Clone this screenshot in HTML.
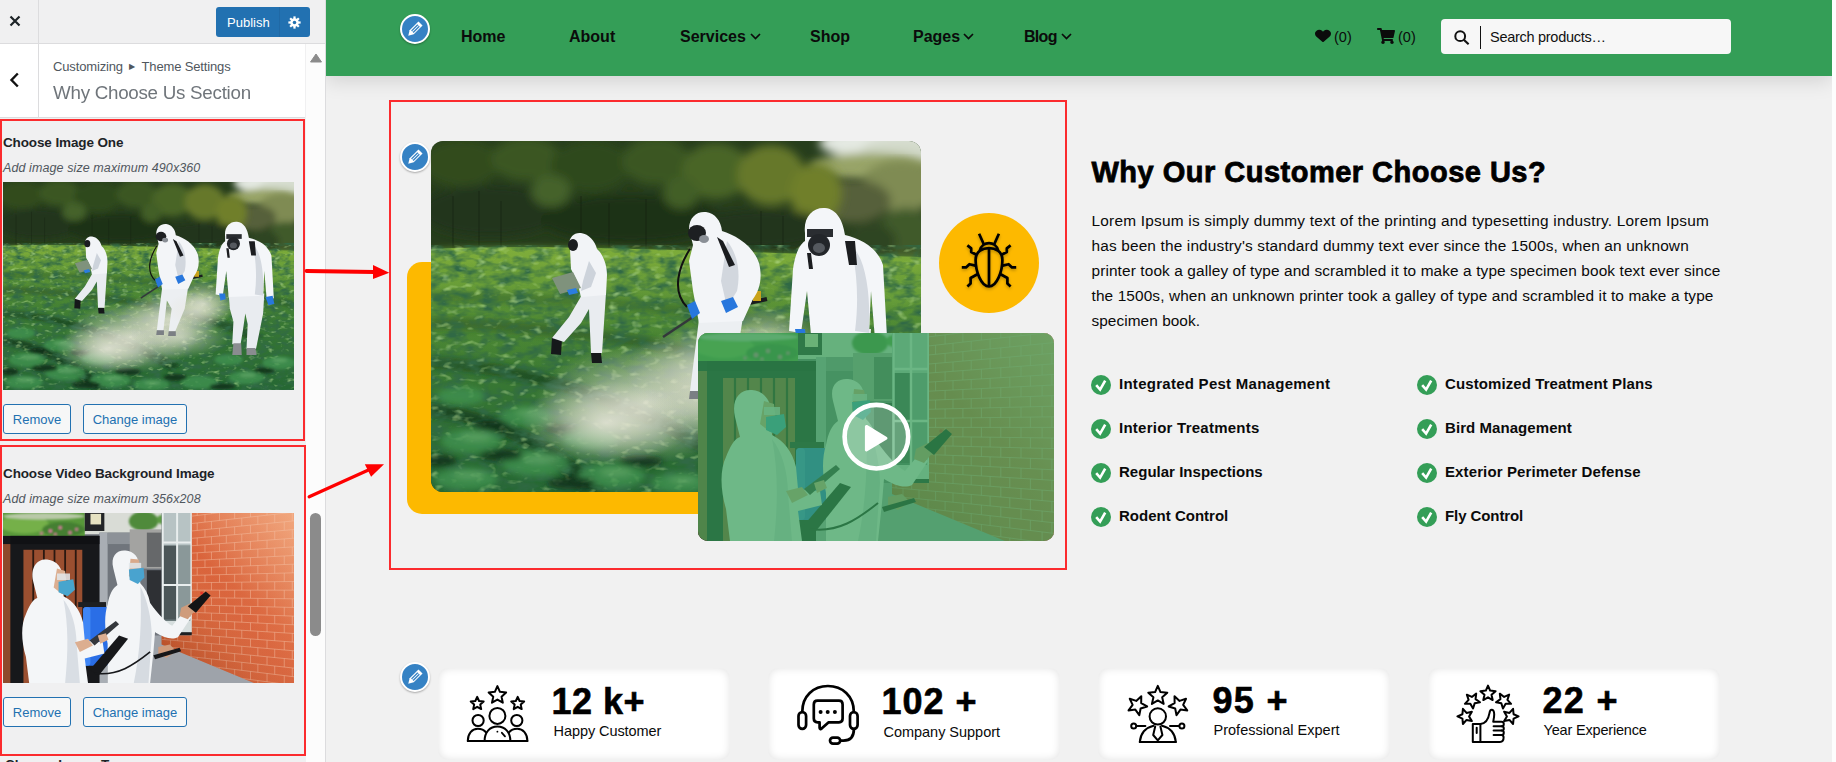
<!DOCTYPE html>
<html lang="en">
<head>
<meta charset="utf-8">
<title>Customize: Why Choose Us Section</title>
<style>
*{box-sizing:border-box;margin:0;padding:0}
html,body{width:1836px;height:762px;overflow:hidden;background:#f0f0f1;font-family:"Liberation Sans",sans-serif;color:#000}
.abs{position:absolute}
#side{position:absolute;left:0;top:0;width:326px;height:762px;background:#f0f0f1;overflow:hidden;border-right:1px solid #dcdcde}
#side .top{position:absolute;left:0;top:0;width:325px;height:44px;border-bottom:1px solid #dcdcde;background:#f0f0f1}
#side .close{position:absolute;left:0;top:0;width:39px;height:43px;border-right:1px solid #dcdcde}
#side .hdr{position:absolute;left:0;top:44px;width:305px;height:74px;background:#fff;border-bottom:1px solid #dcdcde}
#side .back{position:absolute;left:0;top:0;width:39px;height:73px;border-right:1px solid #dcdcde}
#side .track{position:absolute;left:306px;top:44px;width:19px;height:718px;background:#fcfcfc}
#side .thumb{position:absolute;left:310px;top:513px;width:11px;height:123px;border-radius:6px;background:#8b8b8b}
.pub{position:absolute;left:216px;top:7px;width:94px;height:30px;background:#2271b1;border-radius:3px;color:#fff;font-size:13px;line-height:30px}
.pub span{position:absolute;left:11px;top:1px}
.crumb{position:absolute;left:53px;top:15px;font-size:13px;color:#50575e;white-space:nowrap;line-height:16px}
.ttl{position:absolute;left:53px;top:35px;font-size:18.8px;color:#50575e;white-space:nowrap;line-height:28px;font-weight:400;letter-spacing:-0.2px;opacity:.82}
.rbox{position:absolute;border:2px solid #fb2b2e}
.lab{position:absolute;left:3px;font-size:13.5px;font-weight:700;color:#1d2327;white-space:nowrap;line-height:16px}
.desc{position:absolute;left:3px;font-size:12.5px;font-style:italic;color:#50575e;white-space:nowrap;line-height:16px}
.btn{position:absolute;height:30px;border:1px solid #2271b1;border-radius:3px;background:#f6f7f7;color:#2271b1;font-size:13px;line-height:29px;text-align:center}
#main{position:absolute;left:326px;top:0;width:1506px;height:762px;background:#f1f1f1;overflow:hidden}
#rstrip{position:absolute;left:1832px;top:0;width:4px;height:762px;background:#fdfdfd}
#nav{position:absolute;left:0;top:0;width:1506px;height:76px;background:#349e57;box-shadow:0 4px 20px rgba(0,0,0,.14)}
.ni{position:absolute;top:27px;font-size:16px;font-weight:700;color:#0b0b0b;line-height:20px;white-space:nowrap}
.cnt{position:absolute;top:28px;font-size:14.5px;color:#0b0b0b;line-height:18px;white-space:nowrap}
.search{position:absolute;left:1115px;top:19px;width:290px;height:35px;background:#f7f7f7;border-radius:4px}
.search .bar{position:absolute;left:38.5px;top:7px;width:1.6px;height:23px;background:#111}
.search .ph{position:absolute;left:49px;top:8px;font-size:14.5px;color:#111;line-height:20px;white-space:nowrap}
.edit{position:absolute;border-radius:50%;background:#3582c4;border:2px solid #fff;box-shadow:0 1px 2px rgba(0,0,0,.3)}
h1.why{-webkit-text-stroke:.8px #000;position:absolute;left:765.5px;top:154px;font-size:29px;font-weight:700;line-height:36px;white-space:nowrap;color:#000;letter-spacing:.1px}
.para{position:absolute;left:765.5px;font-size:15.4px;line-height:25px;white-space:nowrap;color:#0a0a0a}
.li{position:absolute;font-size:15px;font-weight:700;line-height:20px;white-space:nowrap;color:#0a0a0a}
.chk{position:absolute;width:20px;height:20px;border-radius:50%;background:#349e57}
.card{position:absolute;top:668px;width:292px;height:92px;background:#fff;border-radius:10px;box-shadow:inset 0 0 9px rgba(0,0,0,.12)}
.card .num{position:absolute;left:115.5px;top:13.5px;font-size:36px;-webkit-text-stroke:.6px #000;font-weight:700;line-height:40px;white-space:nowrap;color:#000}
.card .lb{position:absolute;left:115.5px;top:54px;font-size:14.5px;line-height:18px;white-space:nowrap;color:#0a0a0a}
</style>
</head>
<body>
<!-- ============ SIDEBAR ============ -->
<div id="side">
  <div class="top">
    <div class="close">
      <svg class="abs" style="left:9px;top:15px" width="12" height="12" viewBox="0 0 12 12"><path d="M1.5 1.5 L10.5 10.5 M10.5 1.5 L1.5 10.5" stroke="#1d2327" stroke-width="2.2" fill="none"/></svg>
    </div>
    <div class="pub"><span>Publish</span>
      <div class="abs" style="left:63px;top:0;width:1px;height:30px;background:#2069a6"></div>
      <svg class="abs" style="left:72px;top:9px" width="13" height="13" viewBox="0 0 14 14"><g fill="#fff"><circle cx="7" cy="7" r="4.6"/><g id="teeth"><rect x="5.8" y="0.4" width="2.4" height="13.2"/><rect x="5.8" y="0.4" width="2.4" height="13.2" transform="rotate(45 7 7)"/><rect x="5.8" y="0.4" width="2.4" height="13.2" transform="rotate(90 7 7)"/><rect x="5.8" y="0.4" width="2.4" height="13.2" transform="rotate(135 7 7)"/></g></g><circle cx="7" cy="7" r="1.9" fill="#2271b1"/></svg>
    </div>
  </div>
  <div class="hdr">
    <div class="back">
      <svg class="abs" style="left:9px;top:28px" width="11" height="16" viewBox="0 0 11 16"><path d="M8.8 1.5 L2.5 8 L8.8 14.5" stroke="#111" stroke-width="2.4" fill="none"/></svg>
    </div>
    <div class="crumb" style="letter-spacing:-0.143px">Customizing <span style="font-size:8px;position:relative;top:-2px;margin:0 3px">&#9654;</span> Theme Settings</div>
    <div class="ttl" style="letter-spacing:-0.273px">Why Choose Us Section</div>
  </div>
  <div class="track">
    <svg class="abs" style="left:3.5px;top:8.8px" width="12" height="10" viewBox="0 0 12 10"><path d="M6 1 L11.5 9 L0.5 9 Z" fill="#8b8b8b" stroke="#8b8b8b" stroke-linejoin="round" stroke-width="1"/></svg>
  </div>
  <div class="thumb"></div>

  <div class="rbox" style="left:0;top:119px;width:305px;height:322px"></div>
  <div class="lab" style="top:135px;letter-spacing:-0.125px">Choose Image One</div>
  <div class="desc" style="top:160px;letter-spacing:0.095px">Add image size maximum 490x360</div>
  <svg class="abs" style="left:3px;top:182px" width="291" height="208" viewBox="0 0 490 351" preserveAspectRatio="none"><use href="#photo1"/></svg>
  <div class="btn" style="left:3px;top:404px;width:68px">Remove</div>
  <div class="btn" style="left:83px;top:404px;width:104px">Change image</div>

  <div class="rbox" style="left:0;top:445px;width:306px;height:310.5px"></div>
  <div class="lab" style="top:466px;letter-spacing:-0.123px">Choose Video Background Image</div>
  <div class="desc" style="top:491px;letter-spacing:0.105px">Add image size maximum 356x208</div>
  <svg class="abs" style="left:3px;top:513px" width="291" height="170" viewBox="0 0 356 208" preserveAspectRatio="none"><use href="#photo2"/></svg>
  <div class="btn" style="left:3px;top:697px;width:68px">Remove</div>
  <div class="btn" style="left:83px;top:697px;width:104px">Change image</div>
  <div class="lab" style="top:757.3px;left:5px">Choose Image Two</div>
</div>

<!-- ============ PREVIEW ============ -->
<div id="main">
  <div id="nav">
    <div class="edit" style="left:74px;top:14px;width:30px;height:30px"><svg class="abs" style="left:0;top:0;width:100%;height:100%" viewBox="-15 -15 30 30"><g transform="rotate(-45) scale(1.08)" fill="#fff"><path d="M-10.2 0 L-5 -3.1 H8.3 V3.1 H-5 Z"/><rect x="-4" y="-1.9" width="9.4" height="3.8" fill="#3582c4"/><rect x="-4" y="-.45" width="9.4" height=".9"/></g></svg></div>
    <div class="ni" style="left:135px">Home</div>
    <div class="ni" style="left:243px">About</div>
    <div class="ni" style="left:354px">Services</div>
    <div class="ni" style="left:484px">Shop</div>
    <div class="ni" style="left:587px">Pages</div>
    <div class="ni" style="left:698px;letter-spacing:-.7px">Blog</div>
    <svg class="abs" style="left:424px;top:33px" width="11" height="7" viewBox="0 0 11 7"><path d="M1 1 L5.5 5.5 L10 1" fill="none" stroke="#0b0b0b" stroke-width="1.7"/></svg><svg class="abs" style="left:637px;top:33px" width="11" height="7" viewBox="0 0 11 7"><path d="M1 1 L5.5 5.5 L10 1" fill="none" stroke="#0b0b0b" stroke-width="1.7"/></svg><svg class="abs" style="left:735px;top:33px" width="11" height="7" viewBox="0 0 11 7"><path d="M1 1 L5.5 5.5 L10 1" fill="none" stroke="#0b0b0b" stroke-width="1.7"/></svg>
    <svg class="abs" style="left:989px;top:29px" width="16" height="14" viewBox="0 0 512 512" preserveAspectRatio="none"><path fill="#0b0b0b" d="M462.3 62.6C407.5 15.9 326 24.3 275.7 76.2L256 96.5l-19.7-20.3C186.1 24.3 104.5 15.9 49.7 62.6c-62.8 53.6-66.1 149.8-9.9 207.9l193.5 199.8c12.5 12.9 32.8 12.9 45.3 0l193.5-199.8c56.3-58.1 53-154.3-9.8-207.9z"/></svg>
    <svg class="abs" style="left:1051px;top:28px" width="18" height="16" viewBox="0 0 576 512" preserveAspectRatio="none"><path fill="#0b0b0b" d="M528.12 301.319l47.273-208C578.806 78.301 567.391 64 551.99 64H159.208l-9.166-44.81C147.758 8.021 137.93 0 126.529 0H24C10.745 0 0 10.745 0 24v16c0 13.255 10.745 24 24 24h69.883l70.248 343.435C147.325 417.1 136 435.222 136 456c0 30.928 25.072 56 56 56s56-25.072 56-56c0-15.674-6.447-29.835-16.824-40h209.647C430.447 426.165 424 440.326 424 456c0 30.928 25.072 56 56 56s56-25.072 56-56c0-22.172-12.888-41.332-31.579-50.405l5.517-24.276c3.413-15.018-8.002-29.319-23.403-29.319H218.117l-6.545-32h293.145c11.206 0 20.92-7.754 23.403-18.681z"/></svg>
    <div class="cnt" style="left:1008px">(0)</div>
    <div class="cnt" style="left:1072px">(0)</div>
    <div class="search"><svg class="abs" style="left:12px;top:10px" width="17" height="17" viewBox="0 0 17 17"><circle cx="7.2" cy="7.2" r="4.9" fill="none" stroke="#111" stroke-width="2"/><path d="M10.8 10.8 L15.6 15.2" stroke="#111" stroke-width="2.2"/></svg><div class="bar"></div><div class="ph" style="letter-spacing:-0.28px">Search products&hellip;</div></div>
  </div>

  <div class="rbox" style="left:63px;top:100px;width:678px;height:470px"></div>


  <!-- image composition -->
  <div class="abs" style="left:81px;top:262px;width:490px;height:252px;background:#fdb900;border-radius:15px"></div>
  <svg class="abs" style="left:105px;top:141px;border-radius:12px" width="490" height="351" viewBox="0 0 490 351"><use href="#photo1"/></svg>
  <div class="abs" style="left:613px;top:213px;width:100px;height:100px;border-radius:50%;background:#fdb900"></div>
  <svg class="abs" style="left:623px;top:223px;overflow:visible" width="80" height="80" viewBox="-40 -40 80 80">
    <defs><filter id="bsh" x="-30%" y="-30%" width="160%" height="160%"><feDropShadow dx="0" dy="1.5" stdDeviation="1.6" flood-color="#000" flood-opacity=".28"/></filter></defs>
    <g fill="none" stroke="#000" stroke-width="2.7" stroke-linecap="butt" stroke-linejoin="round" filter="url(#bsh)">
      <path d="M0 -14.9 C-6 -14.9 -13.4 -12 -13.4 -3 C-13.4 8 -8 23.5 0 23.5 C8 23.5 13.4 8 13.4 -3 C13.4 -12 6 -14.9 0 -14.9 Z"/>
      <path d="M-9.2 -12.4 C-8 -17 -4 -19.8 0 -19.8 C4 -19.8 8 -17 9.2 -12.4"/>
      <path d="M0 -14.9 V23.5"/>
      <path d="M-5.2 -18.8 L-9.9 -29.2 M5.2 -18.8 L9.9 -29.2"/>
      <path d="M-12.6 -8.2 L-17.8 -11 V-14.6 L-21.6 -17.6 M12.6 -8.2 L17.8 -11 V-14.6 L21.6 -17.6"/>
      <path d="M-13.6 2.6 L-19.6 1.2 L-23 4.4 H-27.2 M13.6 2.6 L19.6 1.2 L23 4.4 H27.2"/>
      <path d="M-11.6 11.2 L-18.4 15 V20.4 L-21.6 23.4 M11.6 11.2 L18.4 15 V20.4 L21.6 23.4"/>
    </g>
  </svg>
  <div class="abs" style="left:372px;top:333px;width:356px;height:208px;border-radius:10px;overflow:hidden;background:#349e57">
    <svg class="abs" style="left:0;top:0" width="356" height="208" viewBox="0 0 356 208"><use href="#photo2"/></svg>
    <div class="abs" style="left:0;top:0;width:356px;height:208px;background:rgba(52,158,87,.7)"></div>
    <svg class="abs" style="left:142px;top:68px" width="72" height="72" viewBox="-36 -36 72 72">
      <circle cx=".4" cy="-.3" r="31.8" fill="rgba(255,255,255,.22)" stroke="#fff" stroke-width="4.6"/>
      <path d="M-9.6 -10.6 L10 1.2 L-9.6 13 Z" fill="#fff" stroke="#fff" stroke-width="3" stroke-linejoin="round"/>
    </svg>
  </div>
  <div class="edit" style="left:74px;top:142px;width:30px;height:30px"><svg class="abs" style="left:0;top:0;width:100%;height:100%" viewBox="-15 -15 30 30"><g transform="rotate(-45) scale(1.08)" fill="#fff"><path d="M-10.2 0 L-5 -3.1 H8.3 V3.1 H-5 Z"/><rect x="-4" y="-1.9" width="9.4" height="3.8" fill="#3582c4"/><rect x="-4" y="-.45" width="9.4" height=".9"/></g></svg></div>
  <div class="edit" style="left:74px;top:662px;width:30px;height:30px"><svg class="abs" style="left:0;top:0;width:100%;height:100%" viewBox="-15 -15 30 30"><g transform="rotate(-45) scale(1.08)" fill="#fff"><path d="M-10.2 0 L-5 -3.1 H8.3 V3.1 H-5 Z"/><rect x="-4" y="-1.9" width="9.4" height="3.8" fill="#3582c4"/><rect x="-4" y="-.45" width="9.4" height=".9"/></g></svg></div>

  <h1 class="why" style="letter-spacing:0.488px">Why Our Customer Choose Us?</h1>
  <div class="para" style="top:208px;letter-spacing:0.221px">Lorem Ipsum is simply dummy text of the printing and typesetting industry. Lorem Ipsum</div>
  <div class="para" style="top:233px;letter-spacing:0.156px">has been the industry's standard dummy text ever since the 1500s, when an unknown</div>
  <div class="para" style="top:258px;letter-spacing:0.115px">printer took a galley of type and scrambled it to make a type specimen book text ever since</div>
  <div class="para" style="top:283px;letter-spacing:0.117px">the 1500s, when an unknown printer took a galley of type and scrambled it to make a type</div>
  <div class="para" style="top:308px;letter-spacing:0.054px">specimen book.</div>

  <div class="chk" style="left:765px;top:375px"><svg width="20" height="20" viewBox="-10 -10 20 20" style="position:absolute;left:0;top:0"><path d="M-4.8 0.2 L-0.9 4.6 L4.2 -4.4" fill="none" stroke="#fff" stroke-width="2.6" stroke-linejoin="miter"/></svg></div><div class="li" style="left:793px;top:374px;letter-spacing:0.267px">Integrated Pest Management</div>
  <div class="chk" style="left:1091px;top:375px"><svg width="20" height="20" viewBox="-10 -10 20 20" style="position:absolute;left:0;top:0"><path d="M-4.8 0.2 L-0.9 4.6 L4.2 -4.4" fill="none" stroke="#fff" stroke-width="2.6" stroke-linejoin="miter"/></svg></div><div class="li" style="left:1119px;top:374px;letter-spacing:0.098px">Customized Treatment Plans</div>
  <div class="chk" style="left:765px;top:419px"><svg width="20" height="20" viewBox="-10 -10 20 20" style="position:absolute;left:0;top:0"><path d="M-4.8 0.2 L-0.9 4.6 L4.2 -4.4" fill="none" stroke="#fff" stroke-width="2.6" stroke-linejoin="miter"/></svg></div><div class="li" style="left:793px;top:418px;letter-spacing:0.246px">Interior Treatments</div>
  <div class="chk" style="left:1091px;top:419px"><svg width="20" height="20" viewBox="-10 -10 20 20" style="position:absolute;left:0;top:0"><path d="M-4.8 0.2 L-0.9 4.6 L4.2 -4.4" fill="none" stroke="#fff" stroke-width="2.6" stroke-linejoin="miter"/></svg></div><div class="li" style="left:1119px;top:418px;letter-spacing:0.067px">Bird Management</div>
  <div class="chk" style="left:765px;top:463px"><svg width="20" height="20" viewBox="-10 -10 20 20" style="position:absolute;left:0;top:0"><path d="M-4.8 0.2 L-0.9 4.6 L4.2 -4.4" fill="none" stroke="#fff" stroke-width="2.6" stroke-linejoin="miter"/></svg></div><div class="li" style="left:793px;top:462px;letter-spacing:0.018px">Regular Inspections</div>
  <div class="chk" style="left:1091px;top:463px"><svg width="20" height="20" viewBox="-10 -10 20 20" style="position:absolute;left:0;top:0"><path d="M-4.8 0.2 L-0.9 4.6 L4.2 -4.4" fill="none" stroke="#fff" stroke-width="2.6" stroke-linejoin="miter"/></svg></div><div class="li" style="left:1119px;top:462px;letter-spacing:0.12px">Exterior Perimeter Defense</div>
  <div class="chk" style="left:765px;top:507px"><svg width="20" height="20" viewBox="-10 -10 20 20" style="position:absolute;left:0;top:0"><path d="M-4.8 0.2 L-0.9 4.6 L4.2 -4.4" fill="none" stroke="#fff" stroke-width="2.6" stroke-linejoin="miter"/></svg></div><div class="li" style="left:793px;top:506px;letter-spacing:0.011px">Rodent Control</div>
  <div class="chk" style="left:1091px;top:507px"><svg width="20" height="20" viewBox="-10 -10 20 20" style="position:absolute;left:0;top:0"><path d="M-4.8 0.2 L-0.9 4.6 L4.2 -4.4" fill="none" stroke="#fff" stroke-width="2.6" stroke-linejoin="miter"/></svg></div><div class="li" style="left:1119px;top:506px;letter-spacing:-0.087px">Fly Control</div>
  <div class="card" style="left:112px"><svg class="abs" style="left:17px;top:7px" width="90" height="75" viewBox="0 0 90 75" fill="none" stroke="#000" stroke-width="2" stroke-linejoin="round" stroke-linecap="round">
      <path d="M42.40 11.10 L44.94 16.80 L51.15 17.46 L46.51 21.64 L47.81 27.74 L42.40 24.62 L36.99 27.74 L38.29 21.64 L33.65 17.46 L39.86 16.80 Z"/><path d="M22.20 21.80 L24.08 26.01 L28.67 26.50 L25.24 29.59 L26.20 34.10 L22.20 31.80 L18.20 34.10 L19.16 29.59 L15.73 26.50 L20.32 26.01 Z"/><path d="M62.70 21.80 L64.58 26.01 L69.17 26.50 L65.74 29.59 L66.70 34.10 L62.70 31.80 L58.70 34.10 L59.66 29.59 L56.23 26.50 L60.82 26.01 Z"/>
      <circle cx="42.4" cy="40.9" r="8"/><circle cx="23.1" cy="45.5" r="5.6"/><circle cx="61.8" cy="45.5" r="5.6"/>
      <path d="M12.8 66 H72.4"/>
      <path d="M29.6 66 C29.6 57 35 51.6 42.4 51.6 C49.8 51.6 55.4 57 55.4 66"/>
      <path d="M12.8 66 C12.8 58.5 17 53.8 22.8 53.8 C26.6 53.8 29.4 55.4 31.2 57.6"/>
      <path d="M72.4 66 C72.4 58.5 68 53.8 62.2 53.8 C58.4 53.8 55.6 55.4 53.8 57.6"/>
      <path d="M42.4 56.6 v.1 M46.9 57.8 L50 61.4" stroke-width="1.8"/>
    </svg><div class="num" style="left:113.5px;letter-spacing:0.5px">12 k+</div><div class="lb" style="letter-spacing:-0.069px">Happy Customer</div></div>
  <div class="card" style="left:442px"><svg class="abs" style="left:17px;top:7px" width="90" height="75" viewBox="0 0 90 75" fill="none" stroke="#000" stroke-width="2.7" stroke-linejoin="round" stroke-linecap="round">
      <path d="M17.3 36.6 C17.3 21 28.5 11 42.9 11 C57.3 11 68.8 21 68.8 36.6"/>
      <rect x="13.5" y="37.2" width="7.6" height="16.6" rx="3.8"/>
      <rect x="65" y="37.2" width="7.6" height="16.6" rx="3.8"/>
      <path d="M68.9 54 C68.9 62 65 65.6 58.5 65.6 H56"/>
      <rect x="45" y="62.6" width="10.2" height="6" rx="3"/>
      <path d="M32.5 25.6 H54 C56.4 25.6 57.6 27 57.6 29.4 V43.6 C57.6 46 56.4 47.4 54 47.4 H43.4 L36.6 53.6 C35.6 54.4 34.6 54 34.6 52.8 V47.4 H32.5 C30 47.4 28.8 46 28.8 43.6 V29.4 C28.8 27 30 25.6 32.5 25.6 Z"/>
      <g fill="#000" stroke="none"><circle cx="35.6" cy="37.1" r="2"/><circle cx="42.7" cy="37.1" r="2"/><circle cx="49.9" cy="37.1" r="2"/></g>
    </svg><div class="num" style="left:113.5px;letter-spacing:1.0px">102 +</div><div class="lb" style="top:55px;letter-spacing:-0.027px">Company Support</div></div>
  <div class="card" style="left:772px"><svg class="abs" style="left:17px;top:7px" width="90" height="75" viewBox="0 0 90 75" fill="none" stroke="#000" stroke-width="2" stroke-linejoin="round" stroke-linecap="round">
      <path d="M42.80 10.80 L45.50 17.08 L52.31 17.71 L47.17 22.22 L48.68 28.89 L42.80 25.40 L36.92 28.89 L38.43 22.22 L33.29 17.71 L40.10 17.08 Z"/><path d="M26.27 21.26 L26.18 28.10 L32.15 31.45 L25.62 33.48 L24.28 40.18 L20.33 34.60 L13.54 35.40 L17.63 29.92 L14.77 23.71 L21.24 25.90 Z"/><path d="M59.53 21.26 L64.56 25.90 L71.03 23.71 L68.17 29.92 L72.26 35.40 L65.47 34.60 L61.52 40.18 L60.18 33.48 L53.65 31.45 L59.62 28.10 Z"/>
      <circle cx="42.8" cy="41.4" r="8.2"/>
      <path d="M24.8 67 H60.8"/>
      <path d="M24.8 67 C25.6 58.4 31 52.6 38.6 50.8 M60.8 67 C60 58.4 54.6 52.6 47 50.8"/>
      <path d="M40.2 51.4 L38.2 60 L42.8 65.4 L47.4 60 L45.4 51.4"/>
      <circle cx="18.7" cy="50.9" r="2.5"/><path d="M22 50.9 H30.4"/>
      <circle cx="66.9" cy="50.9" r="2.5"/><path d="M55 50.9 H63.6"/>
    </svg><div class="num" style="top:13px;left:114.5px;letter-spacing:1.3px">95 +</div><div class="lb" style="top:53px;letter-spacing:0.015px">Professional Expert</div></div>
  <div class="card" style="left:1102px"><svg class="abs" style="left:17px;top:7px" width="90" height="75" viewBox="0 0 90 75" fill="none" stroke="#000" stroke-width="2" stroke-linejoin="round" stroke-linecap="round">
      <path d="M43.00 10.60 L45.16 15.62 L50.61 16.13 L46.50 19.74 L47.70 25.07 L43.00 22.28 L38.30 25.07 L39.50 19.74 L35.39 16.13 L40.84 15.62 Z"/><path d="M31.20 18.67 L30.56 24.10 L35.03 27.26 L29.66 28.33 L28.04 33.56 L25.36 28.79 L19.89 28.85 L23.60 24.83 L21.85 19.65 L26.82 21.94 Z"/><path d="M54.80 18.67 L59.18 21.94 L64.15 19.65 L62.40 24.83 L66.11 28.85 L60.64 28.79 L57.96 33.56 L56.34 28.33 L50.97 27.26 L55.44 24.10 Z"/>
      <path d="M17.93 33.79 L21.54 37.90 L26.87 36.70 L24.08 41.40 L26.87 46.10 L21.54 44.90 L17.93 49.01 L17.42 43.56 L12.40 41.40 L17.42 39.24 Z"/><path d="M68.07 33.79 L68.58 39.24 L73.60 41.40 L68.58 43.56 L68.07 49.01 L64.46 44.90 L59.13 46.10 L61.92 41.40 L59.13 36.70 L64.46 37.90 Z"/>
      <rect x="27.8" y="49" width="7.6" height="18"/>
      <path d="M31.7 52.8 V58"/>
      <path d="M35.4 49 C41 48.6 43.6 43 44.4 38.4 C44.8 35.8 45.6 34.8 46.6 34.8 C48.4 34.8 49.2 37 49.2 39.6 C49.2 42.4 48.6 44.8 48.2 46.8 H56.4 C58.2 46.8 58.8 48 58.8 49 C58.8 50.2 58.2 51.2 56.6 51.2 C58.2 51.2 58.8 52.4 58.8 53.4 C58.8 54.6 58.2 55.6 56.6 55.6 C58.2 55.6 58.8 56.8 58.8 57.8 C58.8 59 58.2 60.1 56.6 60.1 C58.2 60.1 58.6 61.4 58.6 62.6 C58.6 65.2 57.6 67 55 67 H35.4"/>
      <path d="M48.6 51.2 H56.6 M48.6 55.6 H56.6 M48.6 60.1 H56.6"/>
    </svg><div class="num" style="top:13px;left:114.5px;letter-spacing:1.3px">22 +</div><div class="lb" style="top:53px;letter-spacing:-0.177px">Year Experience</div></div>
</div>
<div id="rstrip"></div>
<svg class="abs" style="left:0;top:0;pointer-events:none" width="1836" height="762" viewBox="0 0 1836 762">
  <g stroke="#fe0000" fill="#fe0000" stroke-linecap="round">
    <path d="M306.5 270.9 L374 271.9" fill="none" stroke-width="4"/><path d="M373 265 L373 279.1 L389.3 272.7 Z" stroke="none"/>
    <path d="M309.2 496.8 L369 469.8" fill="none" stroke-width="3.3"/><path d="M364.8 464.3 L384 464.3 L371.1 476.8 Z" stroke="none"/>
  </g>
</svg>


<svg width="0" height="0" style="position:absolute">
  <defs>
    <linearGradient id="p1sky" x1="0" y1="0" x2="0" y2="1"><stop offset="0" stop-color="#e3e8e0"/><stop offset=".35" stop-color="#c9d0bd"/><stop offset="1" stop-color="#7f8b52"/></linearGradient>
    <linearGradient id="p1f" x1="0" y1="0" x2="0" y2="1"><stop offset="0" stop-color="#64993a"/><stop offset=".32" stop-color="#417f33"/><stop offset="1" stop-color="#256733"/></linearGradient>
    <linearGradient id="p1y" x1="0" y1="0" x2="0" y2="1"><stop offset="0" stop-color="#8fb83a" stop-opacity=".55"/><stop offset=".6" stop-color="#6fa236" stop-opacity=".28"/><stop offset="1" stop-color="#6fa236" stop-opacity="0"/></linearGradient>
    <radialGradient id="mist"><stop offset="0" stop-color="#efece0" stop-opacity=".8"/><stop offset=".45" stop-color="#e6e3d4" stop-opacity=".5"/><stop offset="1" stop-color="#dedbcc" stop-opacity="0"/></radialGradient>
    <filter id="b1" x="-5%" y="-5%" width="110%" height="110%"><feGaussianBlur stdDeviation="1.2"/></filter>
    <filter id="b2" x="-5%" y="-5%" width="110%" height="110%"><feGaussianBlur stdDeviation="3"/></filter>
    <filter id="b3" x="-5%" y="-5%" width="110%" height="110%"><feGaussianBlur stdDeviation="5"/></filter>
    <filter id="leafD" x="0" y="0" width="100%" height="100%"><feTurbulence type="fractalNoise" baseFrequency=".06 .12" numOctaves="3" seed="4"/><feColorMatrix values="0 0 0 0 0.03  0 0 0 0 0.14  0 0 0 0 0.06  2.4 0 0 0 -0.92"/></filter>
    <filter id="leafL" x="0" y="0" width="100%" height="100%"><feTurbulence type="fractalNoise" baseFrequency=".09 .16" numOctaves="2" seed="11"/><feColorMatrix values="0 0 0 0 0.50  0 0 0 0 0.76  0 0 0 0 0.30  0 2.0 0 0 -1.16"/></filter>
    <symbol id="photo1" viewBox="0 0 490 351">
      <rect width="490" height="351" fill="#263d1c"/>
      <!-- sky + hill top right -->
      <g filter="url(#b3)"><ellipse cx="450" cy="2" rx="62" ry="16" fill="#e4e9e2"/><ellipse cx="470" cy="10" rx="40" ry="14" fill="#d3dacb"/><ellipse cx="440" cy="26" rx="60" ry="14" fill="#98a468"/></g>
      <g filter="url(#b3)">
        <ellipse cx="470" cy="45" rx="40" ry="26" fill="#7f8b52"/>
        <ellipse cx="420" cy="60" rx="40" ry="22" fill="#56603a"/>
        <ellipse cx="475" cy="95" rx="30" ry="28" fill="#3f5a2c"/>
        <ellipse cx="440" cy="100" rx="25" ry="18" fill="#2f4424"/>
      </g>
      <!-- tree crowns -->
      <g filter="url(#b3)">
        <ellipse cx="30" cy="22" rx="40" ry="24" fill="#324c1f"/>
        <ellipse cx="95" cy="18" rx="35" ry="22" fill="#3a5623"/>
        <ellipse cx="160" cy="25" rx="40" ry="26" fill="#2f4a1f"/>
        <ellipse cx="225" cy="20" rx="34" ry="24" fill="#3a5724"/>
        <ellipse cx="285" cy="30" rx="34" ry="28" fill="#4a6526"/>
        <ellipse cx="340" cy="34" rx="34" ry="30" fill="#66782a"/>
        <ellipse cx="385" cy="52" rx="26" ry="30" fill="#6f7f2c"/>
        <ellipse cx="60" cy="70" rx="70" ry="26" fill="#21351a"/>
        <ellipse cx="200" cy="78" rx="90" ry="24" fill="#1d3016"/>
        <ellipse cx="330" cy="88" rx="70" ry="20" fill="#22361a"/>
        <ellipse cx="120" cy="50" rx="20" ry="16" fill="#44622a"/>
        <ellipse cx="250" cy="52" rx="18" ry="16" fill="#425f28"/>
      </g>
      <g stroke="#131f10" stroke-width="1.4" opacity=".4">
        <path d="M22 55V108M48 50V108M70 60V108M150 55V108M178 62V108M215 58V110M330 70V112M352 75V112"/>
      </g>
      <!-- field -->
      <path d="M0 108 C120 102 300 112 490 116 V351 H0 Z" fill="url(#p1f)"/>
      <g filter="url(#b2)">
        <path d="M0 108 C120 102 300 112 490 116 V132 C300 126 120 118 0 124 Z" fill="#6fa23a" opacity=".75"/>
        <path d="M0 150 C150 150 330 165 490 200 V214 C330 178 150 160 0 162 Z" fill="#1d4f26" opacity=".75"/>
        <path d="M0 176 C130 178 300 200 440 260 L420 268 C300 212 130 190 0 188 Z" fill="#174222" opacity=".7"/>
        <path d="M0 215 C90 220 200 250 300 310 L280 318 C190 262 90 232 0 228 Z" fill="#133a1e" opacity=".7"/>
        <path d="M0 262 C60 268 130 300 180 351 H150 C110 310 60 282 0 276 Z" fill="#12351c" opacity=".7"/>
        <ellipse cx="440" cy="150" rx="60" ry="16" fill="#5f9a3a" opacity=".7"/>
        <ellipse cx="60" cy="140" rx="70" ry="10" fill="#5a9436" opacity=".6"/>
      </g>
      <path d="M0 108 C120 102 300 112 490 116 V240 H0 Z" fill="url(#p1y)"/>
      <rect x="0" y="104" width="490" height="247" filter="url(#leafD)"/>
      <rect x="0" y="104" width="490" height="247" filter="url(#leafL)"/>
      <!-- cabbages bottom -->
      <g filter="url(#b2)" opacity=".8">
        <g fill="#3f9250">
          <ellipse cx="40" cy="300" rx="30" ry="12"/><ellipse cx="105" cy="322" rx="34" ry="13"/><ellipse cx="35" cy="338" rx="32" ry="11"/>
          <ellipse cx="180" cy="335" rx="34" ry="12"/><ellipse cx="250" cy="342" rx="30" ry="10"/><ellipse cx="95" cy="275" rx="26" ry="10"/>
          <ellipse cx="160" cy="298" rx="28" ry="10"/><ellipse cx="30" cy="255" rx="24" ry="9"/><ellipse cx="330" cy="338" rx="30" ry="11"/>
          <ellipse cx="410" cy="330" rx="30" ry="11"/><ellipse cx="465" cy="305" rx="28" ry="11"/><ellipse cx="380" cy="300" rx="24" ry="9"/>
        </g>
        <g fill="#0f2c18">
          <ellipse cx="70" cy="314" rx="22" ry="6"/><ellipse cx="140" cy="342" rx="24" ry="6"/><ellipse cx="10" cy="320" rx="16" ry="6"/>
          <ellipse cx="210" cy="320" rx="22" ry="6"/><ellipse cx="60" cy="285" rx="18" ry="5"/><ellipse cx="130" cy="288" rx="16" ry="5"/>
          <ellipse cx="290" cy="330" rx="20" ry="6"/><ellipse cx="370" cy="345" rx="22" ry="5"/><ellipse cx="440" cy="318" rx="18" ry="5"/>
        </g>
        <g fill="#7fc07e" opacity=".55">
          <ellipse cx="45" cy="296" rx="16" ry="4"/><ellipse cx="110" cy="318" rx="18" ry="4"/><ellipse cx="185" cy="331" rx="16" ry="4"/>
          <ellipse cx="38" cy="334" rx="16" ry="3.5"/><ellipse cx="98" cy="272" rx="13" ry="3.5"/><ellipse cx="252" cy="339" rx="14" ry="3"/>
          <ellipse cx="412" cy="326" rx="14" ry="3.5"/><ellipse cx="466" cy="301" rx="13" ry="3.5"/>
        </g>
      </g>
      <!-- mist -->
      <ellipse cx="215" cy="262" rx="112" ry="60" fill="url(#mist)"/>
      <ellipse cx="280" cy="232" rx="85" ry="50" fill="url(#mist)"/>
      <ellipse cx="175" cy="282" rx="85" ry="42" fill="url(#mist)"/>
      <ellipse cx="335" cy="205" rx="60" ry="40" fill="url(#mist)" opacity=".9"/>
      <ellipse cx="300" cy="262" rx="80" ry="36" fill="url(#mist)" opacity=".7"/>
      <!-- figure 1 (left) -->
      <g>
        <path d="M121 196 L131 198 L130 214 L120 213 Z M160 212 L170 212 L171 222 L161 222 Z" fill="#15181a"/>
        <path d="M152 152 L138 176 L121 197 L133 201 L150 182 L158 168 L160 212 L171 212 L175 152 Z" fill="#e9ecf0"/>
        <path d="M139 108 C136 98 142 91 150 92 C158 93 164 100 166 108 C172 113 176 124 176 134 L175 154 L150 156 L146 140 L140 128 Z" fill="#f2f4f7"/>
        <path d="M158 120 L165 132 L160 146 L150 150 L152 140 Z" fill="#cdd3db"/>
        <ellipse cx="142" cy="104" rx="5" ry="6" fill="#1b1d20"/>
        <path d="M121 137 L142 131 L150 147 L129 153 Z" fill="#7f927c"/>
        <path d="M136 149 l9 -2 l2 5 l-9 2z" fill="#2b7de0"/>
      </g>
      <!-- figure 2 (middle) -->
      <g>
        <path d="M259 108 C248 125 240 150 256 166" fill="none" stroke="#111" stroke-width="2"/>
        <path d="M262 176 L232 196" stroke="#33373a" stroke-width="2.5"/>
        <path d="M300 166 L336 158" stroke="#1a1c1e" stroke-width="4"/>
        <path d="M322 150 h8 v10 h-8z" fill="#c9a21a"/>
        <path d="M268 178 L312 176 L306 214 L290 252 L279 252 L284 214 L276 200 L270 252 L259 250 Z" fill="#eceff2"/>
        <path d="M259 250 h12 v8 h-13z M279 252 h12 v8 h-13z" fill="#7b7f84"/>
        <path d="M258 88 C258 76 266 70 275 71 C284 72 290 80 291 90 C304 94 322 104 328 122 C332 138 328 150 322 158 L312 180 L268 182 L262 150 L258 120 L262 104 Z" fill="#f3f5f8"/>
        <path d="M296 100 C306 112 310 130 306 150 L296 166 L290 140 Z" fill="#d2d7de"/>
        <path d="M286 96 L292 100 L304 124 L298 126 Z" fill="#1a1c1f"/>
        <ellipse cx="266" cy="92" rx="9" ry="8" fill="#1d1f22"/>
        <ellipse cx="273" cy="98" rx="5" ry="4" fill="#8a8f96"/>
        <path d="M256 164 l8 -4 l5 12 l-8 6z" fill="#2877dd"/>
        <path d="M290 160 l12 -4 l5 10 l-12 6z" fill="#2877dd"/>
      </g>
      <!-- figure 3 (right) -->
      <g>
        <path d="M380 190 L440 188 L438 222 L430 262 L426 282 L410 282 L412 240 L408 222 L404 250 L400 274 L386 274 L388 236 L382 214 Z" fill="#e9ecf0"/>
        <path d="M388 272 h13 l1 20 h-16z M410 280 h15 l2 12 h-17z" fill="#8a8c90"/>
        <path d="M374 92 C372 76 382 66 394 67 C406 68 412 80 414 94 C430 98 446 106 452 124 L456 196 L444 198 L440 150 L438 192 L380 194 L376 150 L370 192 L358 190 L362 128 C364 114 368 104 374 100 Z" fill="#f4f6f9"/>
        <path d="M420 104 C434 116 440 150 438 192 L424 190 C428 160 426 130 420 104 Z" fill="#d4d9e0"/>
        <path d="M414 100 L424 100 L426 124 L418 124 Z M376 112 l4 0 l2 16 l-4 0z" fill="#1b1d20"/>
        <path d="M376 88 h26 v8 h-26z" fill="#2a2d31"/>
        <ellipse cx="388" cy="104" rx="11" ry="11" fill="#23262a"/>
        <ellipse cx="388" cy="107" rx="6" ry="5" fill="#55595f"/>
        <path d="M364 188 l10 0 l1 10 l-9 2z" fill="#2877dd"/>
        <path d="M442 194 l12 -2 l3 14 l-10 2z" fill="#2877dd"/>
      </g>
      <ellipse cx="330" cy="215" rx="55" ry="30" fill="url(#mist)" opacity=".55"/>
    </symbol>
    <linearGradient id="brk" x1="0" y1="1" x2="1" y2="0"><stop offset="0" stop-color="#d8602f"/><stop offset=".5" stop-color="#d9623a"/><stop offset="1" stop-color="#ec9468"/></linearGradient>
    <linearGradient id="brksh" x1="1" y1="0" x2=".3" y2="1"><stop offset="0" stop-color="#ffd9b8" stop-opacity=".28"/><stop offset=".5" stop-color="#ffd9b8" stop-opacity="0"/><stop offset="1" stop-color="#5a1f0c" stop-opacity=".25"/></linearGradient>
    <clipPath id="brkclip"><path d="M231 0 H356 V208 H307 L194 161 V150 H231 Z"/></clipPath>
    <symbol id="photo2" viewBox="0 0 356 208">
      <rect width="356" height="208" fill="#6d7278"/>
      <!-- background building / plants top -->
      <rect x="98" y="0" width="134" height="26" fill="#d9dcd6"/>
      <g filter="url(#b1)"><ellipse cx="172" cy="10" rx="18" ry="12" fill="#4f8a3a"/><ellipse cx="196" cy="8" rx="8" ry="6" fill="#5c9a42"/></g>
      <!-- foliage top-left -->
      <rect x="0" y="0" width="100" height="30" fill="#58983a"/>
      <g filter="url(#b1)">
        <ellipse cx="26" cy="14" rx="30" ry="11" fill="#74b048"/><ellipse cx="74" cy="20" rx="26" ry="9" fill="#447f30"/><ellipse cx="50" cy="4" rx="50" ry="4" fill="#b9c9a8"/>
        <g fill="#e07aa6"><circle cx="58" cy="22" r="2.2"/><circle cx="70" cy="18" r="2"/><circle cx="82" cy="24" r="2"/><circle cx="47" cy="25" r="1.8"/><circle cx="90" cy="20" r="1.6"/><circle cx="64" cy="26" r="1.6"/></g>
      </g>
      <!-- gray wall middle + AC unit -->
      <rect x="118" y="24" width="78" height="184" fill="#70757c"/>
      <rect x="118" y="24" width="10" height="184" fill="#a9aeb4"/>
      <rect x="128" y="24" width="28" height="14" fill="#8d9298"/>
      <rect x="155" y="20" width="40" height="48" fill="#a3a3a1"/>
      <rect x="176" y="24" width="18" height="42" fill="#66686a"/>
      <rect x="176" y="70" width="18" height="76" fill="#2e3034"/>
      <!-- lamp -->
      <rect x="100" y="0" width="24" height="22" fill="#222427"/><rect x="107" y="1" width="13" height="13" fill="#e6e2c2"/>
      <!-- gate -->
      <rect x="0" y="28" width="118" height="180" fill="#17181b"/>
      <rect x="0" y="38" width="9" height="170" fill="#8e4a2c"/>
      <rect x="25" y="45" width="72" height="163" fill="#9a4f30"/>
      <path d="M37 45V208M50 45V208M63 45V208M76 45V208M89 45V208" stroke="#2a1810" stroke-width="2.2"/>
      <rect x="9" y="28" width="109" height="10" fill="#101114"/>
      <!-- window -->
      <rect x="194" y="0" width="38" height="152" fill="#5f6e70"/>
      <rect x="196" y="0" width="34" height="40" fill="#b7c3c4"/>
      <rect x="197" y="40" width="15" height="90" fill="#4b5658"/>
      <rect x="214" y="40" width="16" height="100" fill="#8a9899"/>
      <path d="M195.5 0V146M213 0V146M230.5 0V146M195 36H231M195 88H231" stroke="#e9eeee" stroke-width="2.4"/>
      <rect x="196" y="132" width="35" height="14" fill="#d6dede"/>
      <rect x="194" y="146" width="38" height="6" fill="#1d1f22"/>
      <!-- ground/ledge (gray) -->
      <path d="M176 150 H232 L356 208 H176 Z" fill="#9ea3aa"/>
      <!-- brick wall -->
      <path d="M231 0 H356 V208 H307 L194 161 V150 H231 Z" fill="url(#brk)"/>
      <path d="M194 -17.4L356 -43.4M205.0 -19.2V-10.4M221.0 -21.7V-12.8M237.6 -24.4V-15.3M255.0 -27.2V-17.8M273.2 -30.1V-20.5M292.1 -33.1V-23.3M311.8 -36.3V-26.3M332.4 -39.6V-29.3M353.9 -43.1V-32.5M194 -8.8L356 -32.8M198.0 -9.4V-0.7M213.7 -11.7V-2.9M230.0 -14.1V-5.1M247.1 -16.7V-7.4M264.9 -19.3V-9.8M283.4 -22.0V-12.3M302.8 -24.9V-15.0M323.0 -27.9V-17.7M344.1 -31.0V-20.6M194 -0.2L356 -22.2M205.0 -1.7V7.0M221.0 -3.9V5.1M237.6 -6.1V3.0M255.0 -8.5V0.9M273.2 -11.0V-1.4M292.1 -13.5V-3.7M311.8 -16.2V-6.1M332.4 -19.0V-8.7M353.9 -21.9V-11.3M194 8.4L356 -11.6M198.0 7.9V16.6M213.7 6.0V14.8M230.0 4.0V13.0M247.1 1.8V11.1M264.9 -0.3V9.1M283.4 -2.6V7.1M302.8 -5.0V4.9M323.0 -7.5V2.7M344.1 -10.1V0.3M194 17.0L356 -1.0M205.0 15.8V24.5M221.0 14.0V22.9M237.6 12.2V21.3M255.0 10.2V19.6M273.2 8.2V17.8M292.1 6.1V15.9M311.8 3.9V14.0M332.4 1.6V11.9M353.9 -0.8V9.8M194 25.6L356 9.6M198.0 25.2V33.9M213.7 23.7V32.5M230.0 22.0V31.1M247.1 20.4V29.6M264.9 18.6V28.1M283.4 16.8V26.5M302.8 14.9V24.8M323.0 12.9V23.1M344.1 10.8V21.2M194 34.2L356 20.2M205.0 33.2V42.0M221.0 31.9V40.8M237.6 30.4V39.6M255.0 28.9V38.3M273.2 27.4V36.9M292.1 25.7V35.5M311.8 24.0V34.1M332.4 22.2V32.5M353.9 20.4V31.0M194 42.8L356 30.8M198.0 42.5V51.2M213.7 41.3V50.2M230.0 40.1V49.2M247.1 38.9V48.1M264.9 37.6V47.0M283.4 36.2V45.9M302.8 34.7V44.7M323.0 33.2V43.4M344.1 31.7V42.1M194 51.4L356 41.4M205.0 50.7V59.5M221.0 49.7V58.7M237.6 48.7V57.8M255.0 47.6V57.0M273.2 46.5V56.1M292.1 45.3V55.2M311.8 44.1V54.2M332.4 42.9V53.2M353.9 41.5V52.1M194 60.0L356 52.0M198.0 59.8V68.5M213.7 59.0V67.9M230.0 58.2V67.3M247.1 57.4V66.6M264.9 56.5V66.0M283.4 55.6V65.3M302.8 54.6V64.6M323.0 53.6V63.8M344.1 52.6V63.0M194 68.6L356 62.6M205.0 68.2V76.9M221.0 67.6V76.5M237.6 67.0V76.1M255.0 66.3V75.7M273.2 65.7V75.2M292.1 65.0V74.8M311.8 64.2V74.3M332.4 63.5V73.8M353.9 62.7V73.3M194 77.2L356 73.2M198.0 77.1V85.8M213.7 76.7V85.6M230.0 76.3V85.4M247.1 75.9V85.1M264.9 75.5V84.9M283.4 75.0V84.7M302.8 74.5V84.5M323.0 74.0V84.2M344.1 73.5V83.9M194 85.8L356 83.8M205.0 85.7V94.4M221.0 85.5V94.4M237.6 85.3V94.4M255.0 85.0V94.4M273.2 84.8V94.4M292.1 84.6V94.4M311.8 84.3V94.4M332.4 84.1V94.4M353.9 83.8V94.4M194 94.4L356 94.4M198.0 94.4V103.0M213.7 94.4V103.2M230.0 94.4V103.4M247.1 94.4V103.7M264.9 94.4V103.9M283.4 94.4V104.1M302.8 94.4V104.3M323.0 94.4V104.6M344.1 94.4V104.9M194 103.0L356 105.0M205.0 103.1V111.9M221.0 103.3V112.3M237.6 103.5V112.7M255.0 103.8V113.1M273.2 104.0V113.6M292.1 104.2V114.0M311.8 104.5V114.5M332.4 104.7V115.0M353.9 105.0V115.5M194 111.6L356 115.6M198.0 111.7V120.3M213.7 112.1V120.9M230.0 112.5V121.5M247.1 112.9V122.2M264.9 113.3V122.8M283.4 113.8V123.5M302.8 114.3V124.2M323.0 114.8V125.0M344.1 115.3V125.8M194 120.2L356 126.2M205.0 120.6V129.3M221.0 121.2V130.1M237.6 121.8V131.0M255.0 122.5V131.8M273.2 123.1V132.7M292.1 123.8V133.6M311.8 124.6V134.6M332.4 125.3V135.6M353.9 126.1V136.7M194 128.8L356 136.8M198.0 129.0V137.6M213.7 129.8V138.6M230.0 130.6V139.6M247.1 131.4V140.7M264.9 132.3V141.8M283.4 133.2V142.9M302.8 134.2V144.1M323.0 135.2V145.4M344.1 136.2V146.7M194 137.4L356 147.4M205.0 138.1V146.8M221.0 139.1V148.0M237.6 140.1V149.2M255.0 141.2V150.5M273.2 142.3V151.9M292.1 143.5V153.3M311.8 144.7V154.7M332.4 145.9V156.3M353.9 147.3V157.8M194 146.0L356 158.0M198.0 146.3V154.9M213.7 147.5V156.3M230.0 148.7V157.7M247.1 149.9V159.2M264.9 151.2V160.7M283.4 152.6V162.3M302.8 154.1V164.0M323.0 155.6V165.7M344.1 157.1V167.6M194 154.6L356 168.6M205.0 155.6V164.3M221.0 156.9V165.9M237.6 158.4V167.5M255.0 159.9V169.2M273.2 161.4V171.0M292.1 163.1V172.9M311.8 164.8V174.8M332.4 166.6V176.9M353.9 168.4V179.0M194 163.2L356 179.2M198.0 163.6V172.2M213.7 165.1V174.0M230.0 166.8V175.8M247.1 168.4V177.7M264.9 170.2V179.7M283.4 172.0V181.7M302.8 173.9V183.9M323.0 175.9V186.1M344.1 178.0V188.5M194 171.8L356 189.8M205.0 173.0V181.8M221.0 174.8V183.7M237.6 176.6V185.8M255.0 178.6V187.9M273.2 180.6V190.2M292.1 182.7V192.5M311.8 184.9V194.9M332.4 187.2V197.5M353.9 189.6V200.1M194 180.4L356 200.4M198.0 180.9V189.5M213.7 182.8V191.7M230.0 184.8V193.9M247.1 187.0V196.2M264.9 189.1V198.6M283.4 191.4V201.1M302.8 193.8V203.8M323.0 196.3V206.5M344.1 198.9V209.4M194 189.0L356 211.0M205.0 190.5V199.2M221.0 192.7V201.6M237.6 194.9V204.1M255.0 197.3V206.6M273.2 199.8V209.3M292.1 202.3V212.1M311.8 205.0V215.1M332.4 207.8V218.1M353.9 210.7V221.3M194 197.6L356 221.6M198.0 198.2V206.8M213.7 200.5V209.4M230.0 202.9V212.0M247.1 205.5V214.7M264.9 208.1V217.6M283.4 210.8V220.6M302.8 213.7V223.7M323.0 216.7V226.9M344.1 219.8V230.3M194 206.2L356 232.2M205.0 208.0V216.7M221.0 210.5V219.5M237.6 213.2V222.3M255.0 216.0V225.3M273.2 218.9V228.5M292.1 221.9V231.8M311.8 225.1V235.2M332.4 228.4V238.7M353.9 231.9V242.4M194 214.8L356 242.8M198.0 215.5V224.1M213.7 218.2V227.0M230.0 221.0V230.1M247.1 224.0V233.2M264.9 227.0V236.5M283.4 230.3V240.0M302.8 233.6V243.5M323.0 237.1V247.3M344.1 240.7V251.2M194 223.4L356 253.4M205.0 225.4V234.2M221.0 228.4V237.3M237.6 231.5V240.6M255.0 234.7V244.1M273.2 238.1V247.6M292.1 241.6V251.4M311.8 245.2V255.3M332.4 249.0V259.3M353.9 253.0V263.6M194 232.0L356 264.0M198.0 232.8V241.4M213.7 235.9V244.7M230.0 239.1V248.2M247.1 242.5V251.7M264.9 246.0V255.5M283.4 249.7V259.4M302.8 253.5V263.4M323.0 257.5V267.7M344.1 261.6V272.1M194 240.6L356 274.6M205.0 242.9V251.6M221.0 246.3V255.2M237.6 249.8V258.9M255.0 253.4V262.8M273.2 257.2V266.8M292.1 261.2V271.0M311.8 265.3V275.4M332.4 269.6V280.0M353.9 274.2V284.7M194 249.2L356 285.2M198.0 250.1V258.7M213.7 253.6V262.4M230.0 257.2V266.2M247.1 261.0V270.3M264.9 264.9V274.4M283.4 269.1V278.8M302.8 273.4V283.3M323.0 277.9V288.1M344.1 282.6V293.0M194 257.8L356 295.8M205.0 260.4V269.1M221.0 264.1V273.1M237.6 268.0V277.2M255.0 272.1V281.5M273.2 276.4V285.9M292.1 280.8V290.6M311.8 285.4V295.5M332.4 290.3V300.6M353.9 295.3V305.9" stroke="#f0b497" stroke-width=".9" fill="none" opacity=".75" clip-path="url(#brkclip)"/>
      <path d="M231 0 H356 V208 H307 L194 161 V150 H231 Z" fill="url(#brksh)"/>
      <!-- figure 2 (right person) -->
      <g>
        <rect x="92" y="109" width="34" height="6" fill="#1d1f22"/>
        <rect x="98" y="115" width="31" height="72" rx="4" fill="#2a6ee6"/>
        <rect x="98" y="115" width="9" height="72" rx="4" fill="#3f86f5"/>
        <path d="M135 68 C131 52 140 45 150 46 C160 47 167 54 166 66 L168 86 C174 92 178 100 180 110 C190 124 200 134 207 138 L222 120 L230 128 L214 152 C206 156 196 152 186 146 L184 170 L180 208 H128 L128 160 C124 140 124 124 128 112 C130 100 134 92 140 88 Z" fill="#f3f5f7"/>
        <path d="M168 90 C176 104 182 130 182 150 L178 208 H160 C168 170 170 130 168 90 Z" fill="#d6dbe1"/>
        <path d="M156 56 l10 1 l3 16 l-5 12 l-10 -8z" fill="#d9a98a"/>
        <path d="M154 61 h15 v7 h-15z" fill="#dfe6ea" opacity=".85"/>
        <path d="M154 69 l18 -2 l1 12 l-8 8 l-10 -5z" fill="#49a3cf"/>
        <path d="M218 116 l12 -6 l6 8 l-10 12 l-10 -4z" fill="#cf9c7c"/>
        <path d="M226 114 L248 96 L254 101 L236 122 Z" fill="#131416"/>
        <circle cx="243" cy="98" r="1.8" fill="#e3352b"/>
        <path d="M142 150 L153 154 L118 198 L106 192 Z" fill="#17181b"/>
        <path d="M112 196 C140 200 160 186 180 170" fill="none" stroke="#17181b" stroke-width="2"/>
        <path d="M190 164 l14 -3 l8 8 l-12 8 l-10 -4z" fill="#cf9c7c"/>
        <path d="M184 174 L216 165 L218 169 L186 179 Z" fill="#16171a"/>
      </g>
      <!-- figure 1 (left person) -->
      <g>
        <path d="M37 84 C33 66 42 56 54 57 C66 58 74 68 73 82 L74 102 C86 108 94 118 98 134 L100 156 L122 158 L124 172 L100 178 L104 208 H32 L28 176 C22 156 22 136 28 124 C32 114 36 106 42 104 Z" fill="#f4f6f8"/>
        <path d="M74 106 C84 118 90 140 90 160 L94 208 H76 C80 170 80 136 74 106 Z" fill="#d9dee4"/>
        <path d="M66 68 l10 3 l2 16 l-6 12 l-10 -8z" fill="#dcae90"/>
        <path d="M66 74 h16 v8 h-16z" fill="#e2e8ec" opacity=".85"/>
        <path d="M68 84 l18 -3 l2 13 l-9 8 l-11 -5z" fill="#47a5cd"/>
        <path d="M88 158 l16 -4 l6 8 l-16 8z" fill="#dcae90"/>
        <path d="M106 156 L138 132 L142 136 L112 162 Z" fill="#34373c"/>
        <path d="M116 150 l10 -3 l3 8 l-10 5z" fill="#dcae90"/>
      </g>
    </symbol>
  </defs>
</svg>
</body>
</html>
